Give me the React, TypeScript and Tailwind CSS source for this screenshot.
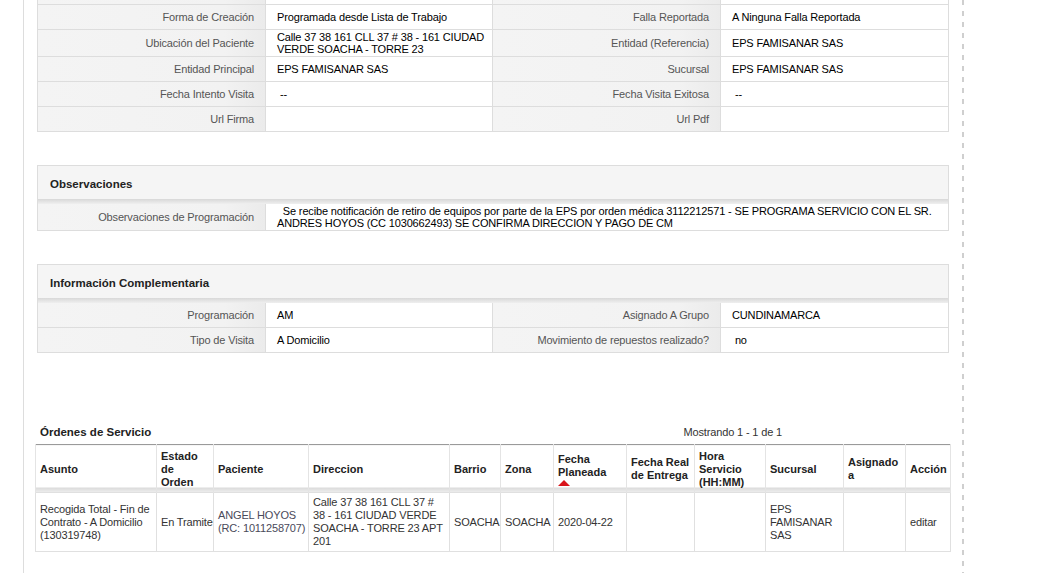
import React from 'react'

type Pair = [string, string, string, string]

const topRows: Pair[] = [
  ['', '', '', ''],
  ['Forma de Creación', 'Programada desde Lista de Trabajo', 'Falla Reportada', 'A Ninguna Falla Reportada'],
  ['Ubicación del Paciente', 'Calle 37 38 161 CLL 37 # 38 - 161 CIUDAD VERDE SOACHA - TORRE 23', 'Entidad (Referencia)', 'EPS FAMISANAR SAS'],
  ['Entidad Principal', 'EPS FAMISANAR SAS', 'Sucursal', 'EPS FAMISANAR SAS'],
  ['Fecha Intento Visita', '\u00a0--', 'Fecha Visita Exitosa', '\u00a0--'],
  ['Url Firma', '', 'Url Pdf', ''],
]

const infoRows: Pair[] = [
  ['Programación', 'AM', 'Asignado A Grupo', 'CUNDINAMARCA'],
  ['Tipo de Visita', 'A Domicilio', 'Movimiento de repuestos realizado?', '\u00a0no'],
]

const labelBg =
  'bg-[linear-gradient(90deg,#f4f4f4_0%,#f2f2f2_82%,#ebebeb_100%)]'

function Label({ children }: { children: React.ReactNode }) {
  return (
    <div className={`flex items-center justify-end pr-[11px] text-[#555] ${labelBg} border-r border-[#ddd]`}>
      <span className="text-right">{children}</span>
    </div>
  )
}

function Value({ children, last }: { children: React.ReactNode; last?: boolean }) {
  return (
    <div className={`flex items-center pl-[11px] pr-[6px] py-[1px] text-black ${last ? '' : 'border-r border-[#ddd]'}`}>
      <span>{children}</span>
    </div>
  )
}

function PairRow({ row, first }: { row: Pair; first?: boolean }) {
  return (
    <div className={`grid grid-cols-[228px_227px_228px_1fr] ${first ? 'min-h-[24px]' : 'min-h-[25px] border-t border-[#ddd]'}`}>
      <Label>{row[0]}</Label>
      <Value>{row[1]}</Value>
      <Label>{row[2]}</Label>
      <Value last>{row[3]}</Value>
    </div>
  )
}

function SectionHeader({ title }: { title: string }) {
  return (
    <>
      <div className="h-[33px] bg-[#f5f5f5] flex items-center pl-[12px] pt-[2px] font-bold text-[11.5px] tracking-normal text-[#222]">{title}</div>
      <div className="h-[5px] bg-[linear-gradient(to_bottom,#d8d8d8,#efefef)]" />
    </>
  )
}

const cols = [121, 57, 95, 141, 51, 53, 73, 68, 71, 78, 62, 45]

const heads: React.ReactNode[] = [
  'Asunto',
  <>Estado<br />de<br />Orden</>,
  'Paciente',
  'Direccion',
  'Barrio',
  'Zona',
  (
    <span>
      Fecha<br />Planeada
      <span className="block w-0 h-0 mt-[1px] border-l-[6px] border-r-[6px] border-b-[6px] border-l-transparent border-r-transparent border-b-[#d9141b]" />
    </span>
  ),
  <>Fecha Real<br />de Entrega</>,
  <>Hora<br />Servicio<br />(HH:MM)</>,
  'Sucursal',
  <>Asignado<br />a</>,
  'Acción',
]

const body: React.ReactNode[] = [
  'Recogida Total - Fin de Contrato - A Domicilio (130319748)',
  <span className="whitespace-nowrap">En Tramite</span>,
  <span className="text-[#4a4a5a] whitespace-nowrap">ANGEL HOYOS<br />(RC: 1011258707)</span>,
  'Calle 37 38 161 CLL 37 # 38 - 161 CIUDAD VERDE SOACHA - TORRE 23 APT 201',
  'SOACHA',
  'SOACHA',
  '2020-04-22',
  '',
  '',
  'EPS FAMISANAR SAS',
  '',
  'editar',
]

export default function App() {
  return (
    <div className="w-[1054px] h-[573px] overflow-hidden bg-white flex font-['Liberation_Sans',Arial,sans-serif] text-[11px] leading-[12px] tracking-[-0.15px]">
      <div className="w-[23px] shrink-0" />
      <div className="w-[939px] shrink-0 border-l border-[#ddd] pl-[13px]">
        <div className="w-[912px]">
          {/* detalle general */}
          <div className="mt-[-21px] border border-[#ddd]">
            {topRows.map((r, i) => (
              <PairRow key={i} row={r} first={i === 0} />
            ))}
          </div>

          {/* observaciones */}
          <div className="mt-[33px] border border-[#ddd]">
            <SectionHeader title="Observaciones" />
            <div className="grid grid-cols-[228px_1fr] min-h-[24px]">
              <Label>Observaciones de Programación</Label>
              <div className="flex items-center pl-[11px] pr-[8px] py-[1px] text-black">
                <span>
                  {'\u00a0\u00a0Se recibe notificación de retiro de equipos por parte de la EPS por orden médica 3112212571 - SE PROGRAMA SERVICIO CON EL SR. ANDRES HOYOS (CC 1030662493) SE CONFIRMA DIRECCION Y PAGO DE CM'}
                </span>
              </div>
            </div>
          </div>

          {/* info complementaria */}
          <div className="mt-[33px] border border-[#ddd]">
            <SectionHeader title="Información Complementaria" />
            {infoRows.map((r, i) => (
              <PairRow key={i} row={r} first={i === 0} />
            ))}
          </div>

          {/* ordenes */}
          <div className="mt-[72px] ml-[-2px] w-[915px]">
            <div className="flex items-center h-[14px] mb-[5px] leading-[14px]">
              <span className="pl-[5px] font-bold text-[11.5px] tracking-normal text-[#222]">Órdenes de Servicio</span>
              <span className="ml-auto pr-[168px] text-[#333]">Mostrando 1 - 1 de 1</span>
            </div>
            <table className="table-fixed w-[915px] border-collapse leading-[13px] text-[#333]">
              <colgroup>
                {cols.map((w, i) => (
                  <col key={i} style={{ width: w }} />
                ))}
              </colgroup>
              <thead>
                <tr className="border-t border-[#9a9a9a]">
                  {heads.map((h, i) => (
                    <th
                      key={i}
                      className="h-[48px] p-0 pl-[4px] pr-[1px] pt-[1px] text-left align-middle font-bold tracking-normal text-[#222] border-x border-[#e4e4e4] bg-[linear-gradient(to_bottom,#fff_42px,#d9d9d9_42px,#f3f3f3_48px)]"
                    >
                      {h}
                    </th>
                  ))}
                </tr>
              </thead>
              <tbody>
                <tr>
                  {body.map((b, i) => (
                    <td
                      key={i}
                      className="h-[58px] pl-[4px] pr-[1px] py-[3px] align-middle border border-[#e0e0e0]"
                    >
                      {b}
                    </td>
                  ))}
                </tr>
              </tbody>
            </table>
          </div>
        </div>
      </div>
      <div className="w-[2px] shrink-0 h-full bg-[repeating-linear-gradient(to_bottom,#cfcfcf_0px,#cfcfcf_5px,transparent_5px,transparent_11px)]" />
    </div>
  )
}
